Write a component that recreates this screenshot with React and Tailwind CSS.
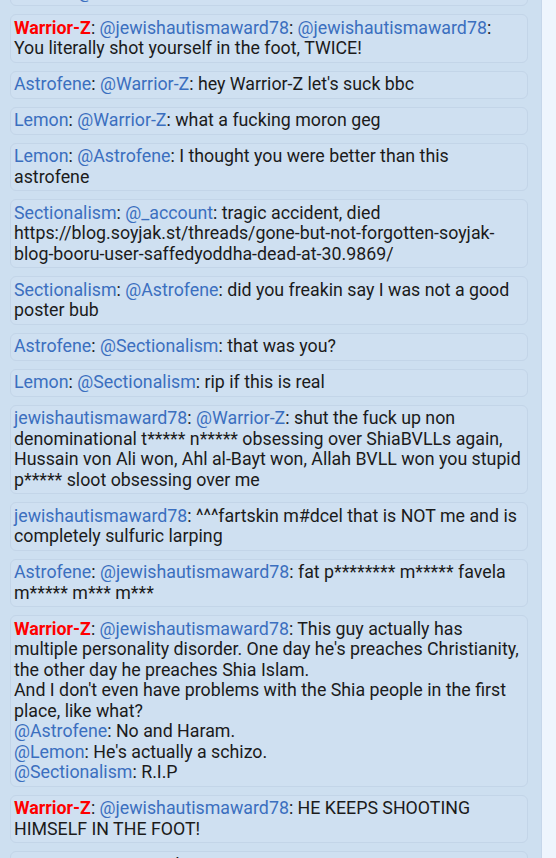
import React from 'react';

const Name = ({ children, red }) =>
  red ? (
    <span className="font-bold text-[#ff0000]">{children}</span>
  ) : (
    <span className="text-[#3b6fbf]">{children}</span>
  );

const At = ({ children }) => <span className="text-[#3b6fbf]">@{children}</span>;

const Msg = ({ children }) => (
  <div className="mt-2 rounded-md border border-[#c3d5e8] bg-[#cfe0f1] pl-[3px] pr-[1px] py-[2.75px] leading-[20.5px] text-[#1b1b1b] break-words">
    {children}
  </div>
);

export default function App() {
  return (
    <div
      className="flex h-[858px] w-[556px] overflow-hidden bg-[#eef5fd] text-[17.8px]"
      style={{ fontFamily: 'Roboto, "Liberation Sans", sans-serif' }}
    >
      <div className="h-full w-[542px] overflow-hidden border-r border-[#c6d7ea] bg-[#cddff0] px-[10px]">
        <div className="-mt-[30px] w-[518px]">
          <Msg>
            <Name>Lemon</Name>: <At>Warrior-Z</At>: lol
          </Msg>
          <Msg>
            <Name red>Warrior-Z</Name>: <At>jewishautismaward78</At>: <At>jewishautismaward78</At>:
            <br />
            You literally shot yourself in the foot, TWICE!
          </Msg>
          <Msg>
            <Name>Astrofene</Name>: <At>Warrior-Z</At>: hey Warrior-Z let's suck bbc
          </Msg>
          <Msg>
            <Name>Lemon</Name>: <At>Warrior-Z</At>: what a fucking moron geg
          </Msg>
          <Msg>
            <Name>Lemon</Name>: <At>Astrofene</At>: I thought you were better than this astrofene
          </Msg>
          <Msg>
            <Name>Sectionalism</Name>: <At>_account</At>: tragic accident, died https://blog.soyjak.st/threads/gone-but-not-forgotten-soyjak-blog-booru-user-saffedyoddha-dead-at-30.9869/
          </Msg>
          <Msg>
            <Name>Sectionalism</Name>: <At>Astrofene</At>: did you freakin say I was not a good poster bub
          </Msg>
          <Msg>
            <Name>Astrofene</Name>: <At>Sectionalism</At>: that was you?
          </Msg>
          <Msg>
            <Name>Lemon</Name>: <At>Sectionalism</At>: rip if this is real
          </Msg>
          <Msg>
            <Name>jewishautismaward78</Name>: <At>Warrior-Z</At>: shut the fuck up non denominational t***** n***** obsessing over ShiaBVLLs again, Hussain von Ali won, Ahl al-Bayt won, Allah BVLL won you stupid p***** sloot obsessing over me
          </Msg>
          <Msg>
            <Name>jewishautismaward78</Name>: ^^^fartskin m#dcel that is NOT me and is completely sulfuric larping
          </Msg>
          <Msg>
            <Name>Astrofene</Name>: <At>jewishautismaward78</At>: fat p******** m***** favela
            <br />
            m***** m*** m***
          </Msg>
          <Msg>
            <Name red>Warrior-Z</Name>: <At>jewishautismaward78</At>: This guy actually has multiple personality disorder. One day he's preaches Christianity, the other day he preaches Shia Islam.
            <br />
            And I don't even have problems with the Shia people in the first place, like what?
            <br />
            <At>Astrofene</At>: No and Haram.
            <br />
            <At>Lemon</At>: He's actually a schizo.
            <br />
            <At>Sectionalism</At>: R.I.P
          </Msg>
          <Msg>
            <Name red>Warrior-Z</Name>: <At>jewishautismaward78</At>: HE KEEPS SHOOTING HIMSELF IN THE FOOT!
          </Msg>
          <Msg>
            <Name>Lemon</Name>: <At>Warrior-Z</At>: lmao
          </Msg>
        </div>
      </div>
    </div>
  );
}
